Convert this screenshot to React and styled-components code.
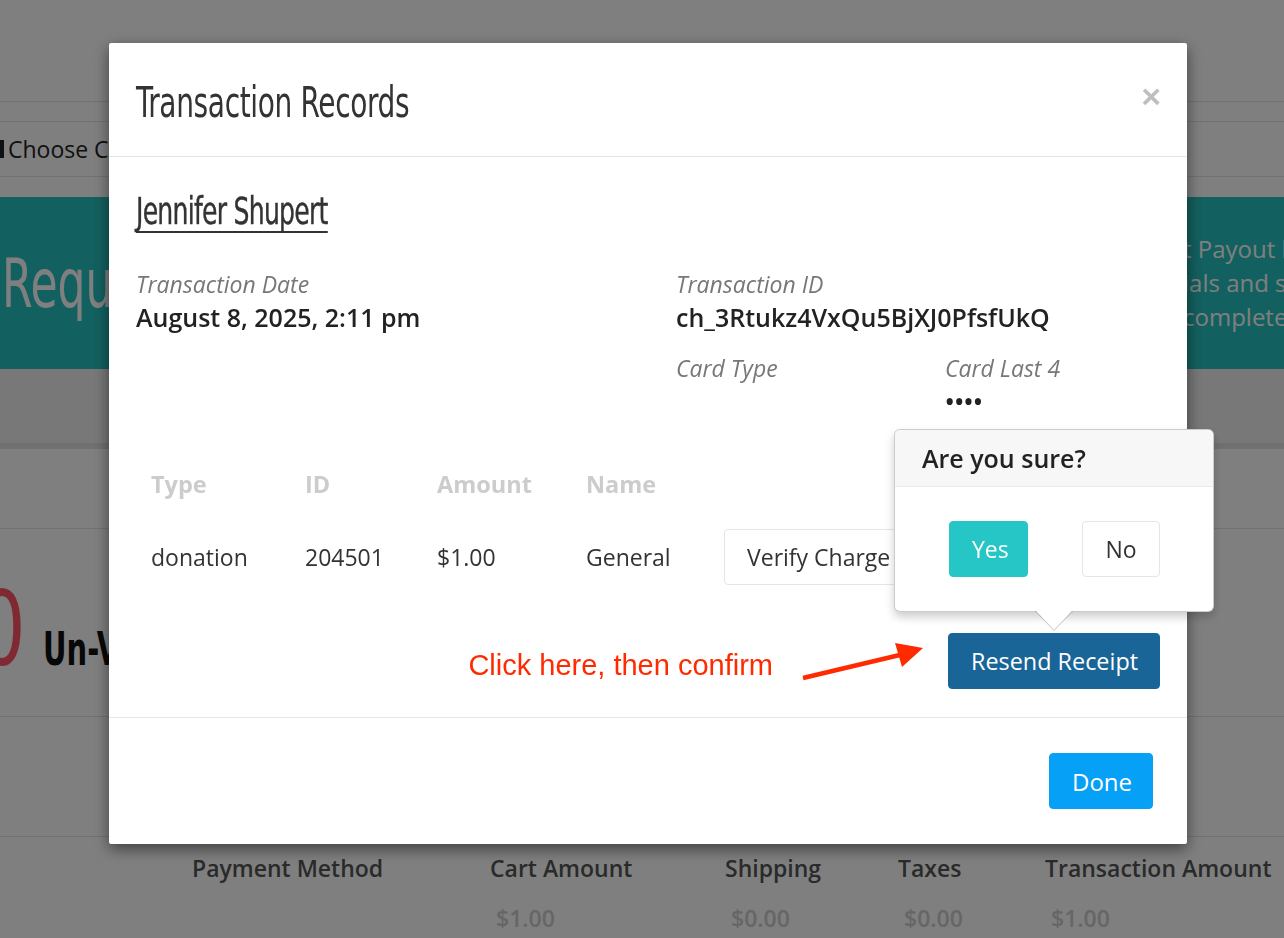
import React from 'react'
import styled, { createGlobalStyle, css } from 'styled-components'

// no Oswald offline: a condensed face squeezed a bit further stands in for it
const condensed = (scale) => css`
  display: inline-block;
  font-family: "Liberation Sans Narrow", "DejaVu Sans Condensed", "Roboto Condensed", sans-serif;
  transform: scaleX(${scale});
  transform-origin: left center;
  white-space: nowrap;
`

const GlobalStyle = createGlobalStyle`
  html, body {
    margin: 0;
    padding: 0;
  }
  body {
    font-family: "Open Sans", sans-serif;
    color: #333;
    background: #fff;
    overflow: hidden;
  }
  * {
    box-sizing: border-box;
  }
`

/* ---------- page behind the modal ---------- */

const Page = styled.div`
  width: 1284px;
  height: 938px;
  overflow: hidden;
`

const Band = styled.div`
  height: ${p => p.$h}px;
  background: ${p => p.$bg || '#fff'};
  border-bottom: ${p => (p.$line ? '1px solid #e5e5e5' : 'none')};
`

const ChooseBar = styled.div`
  height: 55px;
  display: flex;
  align-items: center;
  border-bottom: 1px solid #e5e5e5;
  font-size: 23px;
  color: #222;
`

const Caret = styled.span`
  display: inline-block;
  width: 4px;
  height: 18px;
  margin-right: 4px;
  background: #222;
`

const Banner = styled.div`
  height: 172px;
  background: #26c1c0;
  display: flex;
  align-items: center;
  overflow: hidden;
  white-space: nowrap;
`

const BannerTitle = styled.div`
  width: 1183px;
  flex: none;
  padding-left: 2px;
`

const BannerTitleText = styled.span`
  ${condensed(0.72)};
  font-size: 68px;
  font-weight: 300;
  color: #fff;
`

const BannerText = styled.div`
  font-size: 24px;
  line-height: 34px;
  color: #fff;
`

const GreyStrip = styled.div`
  height: 80px;
  background: #f0f0f0;
  border-bottom: 6px solid #e0e0e0;
`

const Stats = styled.div`
  height: 188px;
  display: flex;
  align-items: baseline;
  padding-top: 48px;
  border-bottom: 1px solid #e5e5e5;
`

const BigNumber = styled.span`
  ${condensed(0.8)};
  font-size: 104px;
  line-height: 1;
  color: #ff5566;
  margin-left: -22px;
`

const StatLabel = styled.span`
  ${condensed(0.7)};
  font-weight: 700;
  font-size: 46px;
  color: #111;
  margin-left: 5px;
`

const Summary = styled.div`
  display: grid;
  grid-template-columns: 192px 298px 235px 173px 147px 1fr;
  row-gap: 20px;
  padding-top: 16px;
  font-size: 23px;
  line-height: 30px;
  font-weight: 600;
  white-space: nowrap;
`

const SumHead = styled.div`
  color: #555;
`

const SumValue = styled.div`
  color: #ccc;
  padding-left: 6px;
`

/* ---------- modal ---------- */

const Backdrop = styled.div`
  position: fixed;
  inset: 0;
  background: rgba(0, 0, 0, 0.5);
  padding: 43px 0 0 109px;
`

const Modal = styled.div`
  width: 1078px;
  background: #fff;
  border-radius: 2px;
  box-shadow: 0 5px 15px rgba(0, 0, 0, 0.5);
`

const Header = styled.div`
  height: 114px;
  display: flex;
  align-items: center;
  justify-content: space-between;
  padding: 0 26px 0 27px;
  border-bottom: 1px solid #e5e5e5;
`

const Title = styled.h4`
  ${condensed(0.725)};
  margin: 0;
  padding-top: 4px;
  font-weight: 300;
  font-size: 43px;
  letter-spacing: -0.5px;
  color: #333;
`

const Close = styled.button`
  background: none;
  border: 0;
  padding: 0;
  margin-top: -8px;
  font-family: "Liberation Sans", sans-serif;
  font-size: 34px;
  font-weight: 700;
  line-height: 1;
  color: #000;
  opacity: 0.25;
`

const Body = styled.div`
  padding: 36px 27px 28px;
`

const Name = styled.h3`
  ${condensed(0.755)};
  margin: 0;
  font-weight: 400;
  font-size: 37px;
  line-height: 38px;
  letter-spacing: -1px;
  color: #333;
  -webkit-text-stroke: 0.4px #333;
  border-bottom: 2px solid #333;
`

const InfoGrid = styled.div`
  display: grid;
  grid-template-columns: 540px 269px 1fr;
  row-gap: 18px;
  margin-top: 35px;
`

const Field = styled.div`
  grid-column: ${p => p.$col || 'auto'};
  grid-row: ${p => p.$row || 'auto'};
`

const Label = styled.div`
  font-style: italic;
  font-size: 23px;
  line-height: 33px;
  color: #777;
`

const Value = styled.div`
  font-weight: 600;
  font-size: 25px;
  line-height: 33px;
  min-height: 33px;
  color: #222;
`

const Table = styled.table`
  margin-top: 41px;
  border-collapse: collapse;
`

const Th = styled.th`
  width: ${p => (p.$w ? `${p.$w}px` : 'auto')};
  padding: 12px 15px;
  text-align: left;
  font-size: 23.5px;
  line-height: 26px;
  font-weight: 700;
  color: #ccc;
`

const Td = styled.td`
  padding: 20px 15px 21px;
  font-size: 23px;
  color: #333;
  vertical-align: middle;
  white-space: nowrap;
`

const Button = styled.button`
  height: 56px;
  width: ${p => (p.$w ? `${p.$w}px` : 'auto')};
  padding: 0 22px;
  border-radius: 4px;
  font-family: "Open Sans", sans-serif;
  font-size: ${p => p.$size || 23}px;
  border: 1px solid ${p => p.$bg || '#e5e5e5'};
  background: ${p => p.$bg || '#fff'};
  color: ${p => (p.$bg ? '#fff' : '#333')};
  white-space: nowrap;
`

const ResendRow = styled.div`
  display: flex;
  justify-content: flex-end;
  align-items: center;
  margin-top: 27px;
`

const Annotation = styled.span`
  font-family: "Liberation Sans", Arial, sans-serif;
  font-size: 29px;
  color: #ff2a00;
  padding-top: 8px;
`

const ArrowSvg = styled.svg`
  margin: 0 22px 0 27px;
  flex: none;
`

const ConfirmWrap = styled.div`
  position: relative;
`

const Popover = styled.div`
  position: absolute;
  left: 50%;
  bottom: calc(100% + 21px);
  transform: translateX(-50%);
  width: 320px;
  background: #fff;
  border: 1px solid rgba(0, 0, 0, 0.2);
  border-radius: 6px;
  box-shadow: 0 5px 10px rgba(0, 0, 0, 0.2);
  z-index: 2;

  &::before,
  &::after {
    content: '';
    position: absolute;
    left: 50%;
    top: 100%;
    border-style: solid;
    border-color: transparent;
  }
  &::before {
    margin-left: -19px;
    border-width: 20px 19px 0;
    border-top-color: rgba(0, 0, 0, 0.25);
  }
  &::after {
    margin-left: -18px;
    border-width: 19px 18px 0;
    border-top-color: #fff;
  }
`

const PopTitle = styled.div`
  height: 57px;
  padding: 0 27px;
  line-height: 56px;
  background: #f7f7f7;
  border-bottom: 1px solid #ebebeb;
  border-radius: 5px 5px 0 0;
  font-size: 25px;
  font-weight: 600;
  color: #222;
`

const PopBody = styled.div`
  display: flex;
  justify-content: space-between;
  padding: 34px 53px 34px 54px;
`

const Footer = styled.div`
  display: flex;
  justify-content: flex-end;
  padding: 35px 34px;
  border-top: 1px solid #e5e5e5;
`

const App = () => {
  return (
    <>
      <GlobalStyle />
      <Page>
        <Band $h={102} $line />
        <Band $h={20} $line />
        <ChooseBar>
          <Caret />
          Choose Campaign
        </ChooseBar>
        <Band $h={20} />
        <Banner>
          <BannerTitle>
            <BannerTitleText>Request Payout</BannerTitleText>
          </BannerTitle>
          <BannerText>
            t Payout by
            <br />
            ials and s
            <br />
            complete
          </BannerText>
        </Banner>
        <GreyStrip />
        <Band $h={80} $line />
        <Stats>
          <BigNumber>0</BigNumber>
          <StatLabel>Un-Verified</StatLabel>
        </Stats>
        <Band $h={120} $line />
        <Summary>
          <div />
          <SumHead>Payment Method</SumHead>
          <SumHead>Cart Amount</SumHead>
          <SumHead>Shipping</SumHead>
          <SumHead>Taxes</SumHead>
          <SumHead>Transaction Amount</SumHead>
          <div />
          <div />
          <SumValue>$1.00</SumValue>
          <SumValue>$0.00</SumValue>
          <SumValue>$0.00</SumValue>
          <SumValue>$1.00</SumValue>
        </Summary>
      </Page>

      <Backdrop>
        <Modal>
          <Header>
            <Title>Transaction Records</Title>
            <Close>×</Close>
          </Header>
          <Body>
            <Name>Jennifer Shupert</Name>
            <InfoGrid>
              <Field $col="1" $row="1">
                <Label>Transaction Date</Label>
                <Value>August 8, 2025, 2:11 pm</Value>
              </Field>
              <Field $col="2 / span 2" $row="1">
                <Label>Transaction ID</Label>
                <Value>ch_3Rtukz4VxQu5BjXJ0PfsfUkQ</Value>
              </Field>
              <Field $col="2" $row="2">
                <Label>Card Type</Label>
                <Value />
              </Field>
              <Field $col="3" $row="2">
                <Label>Card Last 4</Label>
                <Value>••••</Value>
              </Field>
            </InfoGrid>

            <Table>
              <thead>
                <tr>
                  <Th $w={154}>Type</Th>
                  <Th $w={132}>ID</Th>
                  <Th $w={149}>Amount</Th>
                  <Th $w={138}>Name</Th>
                  <Th />
                </tr>
              </thead>
              <tbody>
                <tr>
                  <Td>donation</Td>
                  <Td>204501</Td>
                  <Td>$1.00</Td>
                  <Td>General</Td>
                  <Td>
                    <Button>Verify Charge</Button>
                  </Td>
                </tr>
              </tbody>
            </Table>

            <ResendRow>
              <Annotation>Click here, then confirm</Annotation>
              <ArrowSvg width="126" height="46" viewBox="0 0 126 46">
                <line x1="3" y1="40" x2="104" y2="16" stroke="#ff2a00" strokeWidth="4.5" />
                <polygon points="123,10 95,5 102,29" fill="#ff2a00" />
              </ArrowSvg>
              <ConfirmWrap>
                <Popover>
                  <PopTitle>Are you sure?</PopTitle>
                  <PopBody>
                    <Button $w={79} $bg="#26c6c6">Yes</Button>
                    <Button $w={78}>No</Button>
                  </PopBody>
                </Popover>
                <Button $w={212} $bg="#1a6598" $size={23.4}>Resend Receipt</Button>
              </ConfirmWrap>
            </ResendRow>
          </Body>
          <Footer>
            <Button $w={104} $bg="#07a0f7" $size={24}>Done</Button>
          </Footer>
        </Modal>
      </Backdrop>
    </>
  )
}

export default App
